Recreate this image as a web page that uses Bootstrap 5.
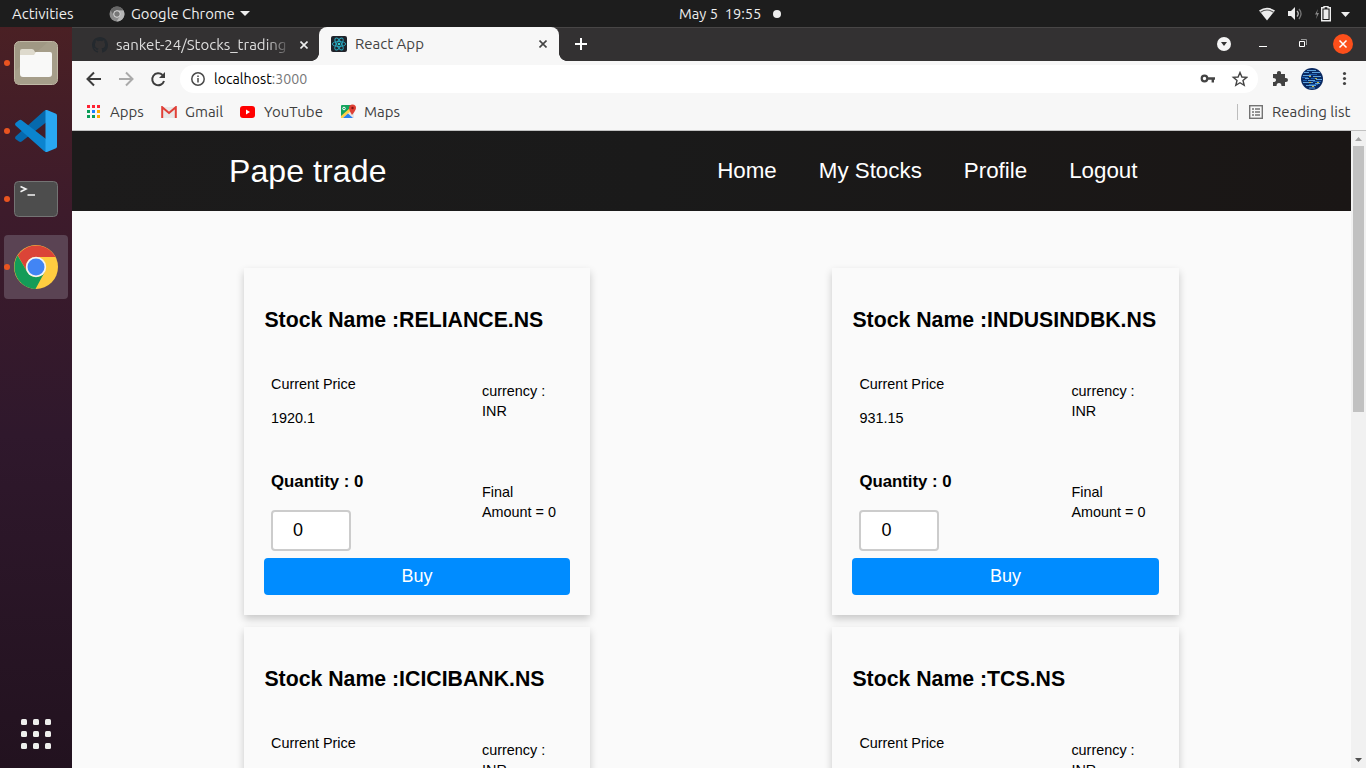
<!DOCTYPE html>
<html lang="en">
<head>
<meta charset="utf-8">
<meta name="viewport" content="width=device-width, initial-scale=1">
<title>React App</title>
<link href="https://cdn.jsdelivr.net/npm/bootstrap@5.3.0/dist/css/bootstrap.min.css" rel="stylesheet">
<style>
  html, body { height: 100%; overflow: hidden; }
  body { font-family: Ubuntu, "Noto Sans", sans-serif; font-size: 15px; line-height: 20px; }
  svg { display: block; flex: none; }
  .t { display: block; white-space: pre; flex: none; }
  .topbar { height: 27px; flex: none; background: #1d1d1d; color: #eee; display: grid; grid-template-columns: 679px 1fr auto; font-size: 14.667px; }
  .dock { width: 72px; background: linear-gradient(#4a2024 0, #3d1b2b 25%, #2f182c 55%, #22121f 100%); padding-top: 4px; flex: none; }
  .dock-item { width: 64px; height: 64px; margin: 0 4px 4px; border-radius: 4px; }
  .dock-item.active { background: #5a4353; }
  .dock-item::before { content: ""; width: 6px; height: 6px; border-radius: 50%; background: #e95420; flex: none; margin-right: 4px; }
  .tabstrip { height: 34px; flex: none; background: #333132; border-top: 1px solid #484646; color: #dedede; }
  .tab-old { width: 247px; padding-left: 20px; height: 33px; }
  .tab-old .t { width: 174px; overflow: hidden; -webkit-mask-image: linear-gradient(90deg, #000 150px, transparent 176px); }
  .tab-on { width: 240px; height: 34px; margin-top: -1px; background: #f7f7f7; color: #444; border-radius: 8px 8px 0 0; padding-left: 12px; position: relative; }
  .tab-on::before, .tab-on::after { content: ""; position: absolute; bottom: 0; width: 8px; height: 8px; }
  .tab-on::before { left: -8px; background: radial-gradient(circle at 0 0, transparent 7.6px, #f7f7f7 8.2px); }
  .tab-on::after { right: -8px; background: radial-gradient(circle at 100% 0, transparent 7.6px, #f7f7f7 8.2px); }
  .toolbar { height: 36px; flex: none; background: #f7f7f7; padding-left: 13px; }
  .omni { width: 1078px; height: 28px; border-radius: 14px; background: #fff; margin-left: 13px; padding-left: 10px; font-size: 14.2px; }
  .bookmarks { height: 34px; flex: none; background: #f7f7f7; border-bottom: 1px solid #c1c1c1; color: #3f3f3f; padding-left: 14px; }
  .site { font-family: "Liberation Sans", Arial, sans-serif; background: #fafafa; color: #000; overflow: hidden; }
  .sitenav { height: 80px; background: linear-gradient(90deg, #1c1b1b 0%, #1a1a1a 45%, #1a1615 100%); color: #fff; padding: 0 213.5px 0 157px; }
  .brand-name { font-size: 32px; line-height: 40px; letter-spacing: .1px; }
  .links { gap: 42px; font-size: 22.35px; line-height: 28px; }
  .stocks { display: grid; grid-template-columns: 346px 347px; column-gap: 242px; row-gap: 12px; padding: 57px 0 0 172px; }
  .stock { height: 347px; padding: 40px 20px 0; background: #fafafa; box-shadow: 0 4px 8px rgba(0,0,0,.2); font-size: 14.4px; line-height: 20px; }
  .stock h2 { font-size: 21.28px; line-height: 24px; font-weight: 700; margin: 0 0 42px .4px; white-space: nowrap; }
  .stock h3 { font-size: 16.8px; line-height: 20px; font-weight: 700; margin: 0 0 18px; }
  .facts { padding-left: 7px; height: 98px; }
  .facts .left { width: 211px; flex: none; }
  .stock:nth-child(even) .facts { padding-left: 7.4px; }
  .stock:nth-child(even) .left { width: 212px; }
  .qty { width: 80px; height: 41px; border: 2px solid #ccc; border-radius: 4px; padding: 0 20px; font-size: 18px; color: #000; background: #fff; }
  .buy { height: 37px; border: 0; border-radius: 4px; background: #008cff; color: #fff; font-size: 18px; line-height: 37px; padding: 0; margin-top: 86px; }
  .scroller { width: 15px; background: #f1f1f1; flex: none; }
  .thumb { width: 11px; height: 266px; background: #c1c1c1; margin: 2px 2px 0; }
</style>
</head>
<body class="d-flex flex-column">
<header class="topbar align-items-center">
  <div class="d-flex align-items-center">
    <span class="t" style="margin-left:12px;width:97px;font-size:15px">Activities</span>
    <svg width="16" height="16" viewBox="0 0 16 16"><circle cx="8" cy="8" r="7.5" fill="#8b8b8b"/><path d="M1.5 4.2A7.5 7.5 0 0 1 14.5 4.5H8A3.6 3.6 0 0 0 4.8 9.5Z" fill="#666"/><path d="M14.5 4.5A7.5 7.5 0 0 1 7.5 15.5L11 10A3.6 3.6 0 0 0 8 4.5Z" fill="#b5b5b5"/><circle cx="8" cy="8" r="3.3" fill="#777" stroke="#ddd"/></svg>
    <span class="t" style="margin-left:6px;width:109px;font-size:14.8px">Google Chrome</span>
    <svg width="10" height="5"><path d="M0 0H10L5 5Z" fill="#eee"/></svg>
  </div>
  <div class="d-flex align-items-center"><span class="t" style="width:94px">May 5  19:55</span><svg width="8" height="8"><circle cx="4" cy="4" r="4" fill="#eee"/></svg></div>
  <div class="d-flex align-items-center" style="padding-right:14px">
    <svg width="94" height="16" viewBox="0 0 94 16" fill="#eee"><path d="M1 4.500Q9 -1 17 4.500L9 14.500Z"/><path d="M2.500 6.200Q9 1.800 15.500 6.200" fill="none" stroke="#555" stroke-width="1.1"/><path d="M30 5H33L37 1V14L33 10H30Z"/><path d="M39 5Q41.500 7.500 39 10.500" stroke="#bbb" fill="none" stroke-width="1.300"/><path d="M41 3Q45 7.500 41 13" stroke="#777" fill="none" stroke-width="1.300"/><path d="M60 3L57 8.500H59L58 13L61 7H59Z" fill="#888"/><path d="M63.700 1.700H66V.5H70V1.700H72.300V14.800H63.700Z" fill="none" stroke="#eee" stroke-width="1.400"/><path d="M65.500 3.500H70.500V13H65.500Z"/><path d="M83 6H92L87.500 11Z"/></svg>
  </div>
</header>
<div class="d-flex flex-grow-1" style="min-height:0">
  <aside class="dock d-flex flex-column">
    <div class="dock-item d-flex align-items-center"><svg width="44" height="44" viewBox="0 0 44 44"><rect x=".5" y=".5" width="43" height="43" rx="5" fill="#a09884" stroke="#c1b9a6"/><path d="M1 30L34 1H39Q43 1 43 5V39Q43 43 39 43H1Z" fill="#aaa28e" opacity=".6"/><path d="M6 12V10Q6 8 8 8H18Q20 8 21 11H36V18H6Z" fill="#dedacd"/><path d="M6 14H20L22 11H36Q38 11 38 13V33Q38 36 35 36H9Q6 36 6 33Z" fill="#f9f9f8"/></svg></div>
    <div class="dock-item d-flex align-items-center"><svg width="44" height="44" viewBox="0 0 44 44"><path d="M32 1L30 2L1.500 27.500Q.5 29 1.500 30L5 32.500Q6.500 33.500 8 32.300L32 13.500Z" fill="#0669ad"/><path d="M1.500 14L5 11.300Q6.500 10.300 8 11.500L32 30V43L30 42L1.500 16.500Q.5 15 1.500 14Z" fill="#0b84cf"/><path d="M31.500 1L33 1L42 4.800Q43 5.300 43 6.500V37.500Q43 38.700 42 39.200L33 43H31.500Z" fill="#29a7f1"/></svg></div>
    <div class="dock-item d-flex align-items-center"><svg width="44" height="36" viewBox="0 0 44 36"><rect x=".5" y=".5" width="43" height="35" rx="4" fill="#4d4d4d" stroke="#747474"/><path d="M6.500 5.500L12 8L6.500 10.800M13.500 14H21" fill="none" stroke="#f4f4f4" stroke-width="1.600"/></svg></div>
    <div class="dock-item active d-flex align-items-center"><svg width="44" height="44" viewBox="0 0 44 44"><circle cx="22" cy="22" r="22" fill="#ffcd40"/><path d="M3.800 10.500A22 22 0 0 1 41.500 12H22A10 10 0 0 0 13.300 27Z" fill="#db4437"/><path d="M3.600 10.600A22 22 0 0 0 21.500 44L30.700 27A10 10 0 0 1 13.300 27Z" fill="#149c58"/><circle cx="22" cy="22" r="10.200" fill="#f4f4f4"/><circle cx="22" cy="22" r="8.500" fill="#4285f4"/></svg></div>
    <svg class="mt-auto" style="margin:0 0 19px 21px" width="30" height="30" fill="#eeeeec"><g id="r"><rect width="6" height="6" rx="1.500"/><rect x="12" width="6" height="6" rx="1.500"/><rect x="24" width="6" height="6" rx="1.500"/></g><use href="#r" y="12"/><use href="#r" y="24"/></svg>
  </aside>
  <main class="d-flex flex-column flex-grow-1" style="min-width:0">
    <div class="tabstrip d-flex">
      <div class="tab-old d-flex align-items-center">
        <svg width="16" height="16" viewBox="0 0 16 16"><path fill="#24292e" d="M8 0C3.580 0 0 3.580 0 8c0 3.540 2.290 6.530 5.470 7.590.4.070.55-.17.55-.38 0-.19-.01-.82-.01-1.490-2.010.37-2.530-.49-2.690-.94-.09-.23-.48-.94-.82-1.130-.28-.15-.68-.52-.01-.53.63-.01 1.080.58 1.230.82.72 1.210 1.870.87 2.330.66.07-.52.28-.87.51-1.070-1.780-.2-3.640-.89-3.640-3.950 0-.87.31-1.590.82-2.150-.08-.2-.36-1.020.08-2.120 0 0 .67-.21 2.200.82a7.500 7.500 0 0 1 4 0c1.530-1.040 2.200-.82 2.200-.82.44 1.100.16 1.920.08 2.120.51.56.82 1.270.82 2.150 0 3.070-1.870 3.750-3.650 3.950.29.25.54.73.54 1.480 0 1.070-.01 1.930-.01 2.200 0 .21.15.46.55.38A8 8 0 0 0 16 8c0-4.420-3.580-8-8-8"/></svg>
        <span class="t" style="margin-left:8px">sanket-24/Stocks_trading</span>
        <svg style="margin-left:10px" width="8" height="8"><path d="M.5.500L7.500 7.500M7.500.500L.5 7.500" stroke="#eee" stroke-width="1.600"/></svg>
      </div>
      <div class="tab-on d-flex align-items-center">
        <svg width="16" height="16" viewBox="0 0 16 16"><rect width="16" height="16" rx="2" fill="#20232a"/><g fill="none" stroke="#28a8c0" stroke-width=".9"><ellipse cx="8" cy="8" rx="6.700" ry="2.500"/><ellipse cx="8" cy="8" rx="6.700" ry="2.500" transform="rotate(60 8 8)"/><ellipse cx="8" cy="8" rx="6.700" ry="2.500" transform="rotate(120 8 8)"/></g><circle cx="8" cy="8" r="1.300" fill="#3cc"/></svg>
        <span class="t" style="margin-left:8px;width:184px">React App</span>
        <svg width="8" height="8"><path d="M.5.500L7.500 7.500M7.500.500L.5 7.500" stroke="#444" stroke-width="1.600"/></svg>
      </div>
      <svg style="margin:10px 0 0 16px" width="12" height="12"><path d="M6 0V12M0 6H12" stroke="#fff" stroke-width="2"/></svg>
      <svg class="ms-auto" style="margin:6px 13px 0 0" width="136" height="20" viewBox="0 0 136 20"><circle cx="7" cy="10" r="7" fill="#f5f5f5"/><path d="M4 8H10L7 12Z" fill="#333"/><path d="M42 12.500H50" stroke="#fff"/><path d="M82.500 7.500H87.500V12.500H82.500Z" fill="none" stroke="#fff"/><path d="M84 5.500H89.500V11" fill="none" stroke="#999"/><circle cx="126" cy="10" r="10" fill="#fc4f1b"/><path d="M122.500 6.500L129.500 13.500M129.500 6.500L122.500 13.500" stroke="#fff" stroke-width="1.500"/></svg>
    </div>
    <div class="toolbar d-flex align-items-center">
      <svg width="82" height="16" viewBox="0 0 82 16" fill="none" stroke="#3c3c3c" stroke-width="2"><path d="M16 8H3M9 1.500L2.500 8L9 14.500"/><path d="M34 8H47M41 1.500L47.500 8L41 14.500" stroke="#aaa"/><path d="M77.500 4A6 6 0 1 0 79 10"/><path d="M80 1V7H74Z" fill="#3c3c3c" stroke="none"/></svg>
      <div class="omni d-flex align-items-center">
        <svg width="16" height="16"><circle cx="8" cy="8" r="6.200" fill="none" stroke="#4a4a4a" stroke-width="1.500"/><path d="M8 7V11.500M8 4.500V6" stroke="#4a4a4a" stroke-width="1.500"/></svg>
        <span class="t" style="margin-left:8px;color:#000">localhost<span style="color:#777">:3000</span></span>
        <svg class="ms-auto" style="margin-right:10px" width="48" height="16" viewBox="0 0 48 16" fill="none" stroke="#444"><circle cx="4.500" cy="7.500" r="2.800" stroke-width="2.200"/><path d="M7 7.500H15M12.800 7.500V11.500" stroke-width="2.400"/><path d="M40 1.500L41.900 6L46.700 6.400L43 9.500L44.200 14.300L40 11.700L35.800 14.300L37 9.500L33.300 6.400L38.100 6Z" stroke-width="1.400"/></svg>
      </div>
      <svg style="margin-left:13px" width="80" height="22" viewBox="0 0 80 22"><path d="M2 6H6Q5.500 3 8 3T10 6H14V10Q17 9.500 17 12T14 14V18H10.500Q10.500 15 8 15T5.500 18H2V14Q5 14 5 12T2 10Z" fill="#424242"/><circle cx="41" cy="11" r="11" fill="#0a2a63"/><g fill="none" stroke-width="1"><path d="M36 2.500H45M33 4.500H38M41 4.500H49M32 7.500H40M42 8.500H50M34 10.500H38M45 11.500H51M37 12.500H44M32 14.500H42M44 15.500H49M35 17.500H45M38 20H44" stroke="#5ea3dc"/><path d="M38 6.500H46M31 9.500H37M40 10.500H44M32 12.500H36M42 13.500H50M38 16.500H47" stroke="#1e62b4"/><path d="M38 8.500H40M44 10.500H46M38 14.500H40M46 14.500H48M41 18.500H43" stroke="#c0b440"/></g><g fill="#444"><circle cx="73.500" cy="5.500" r="1.600"/><circle cx="73.500" cy="10.500" r="1.600"/><circle cx="73.500" cy="15.500" r="1.600"/></g></svg>
    </div>
    <div class="bookmarks d-flex align-items-center pb-1">
      <svg width="14" height="14"><g fill="#f23"><rect x="1" width="3" height="3"/><rect x="6" width="3" height="3"/><rect x="11" width="3" height="3"/></g><path d="M1 5H4V8H1ZM1 10H4V13H1ZM6 10H9V13H6Z" fill="#0a9d58"/><path d="M6 5H9V8H6Z" fill="#1a80ff"/><path d="M11 5H14V8H11ZM11 10H14V13H11Z" fill="#fa0"/></svg>
      <span class="t" style="margin-left:10px;width:51px">Apps</span>
      <svg width="16" height="12"><path d="M1 1H15V12H1Z" fill="#e8e8e8"/><path d="M1.200 12V1.200L8 7L14.800 1.200V12" fill="none" stroke="#e04038" stroke-width="2"/></svg>
      <span class="t" style="margin-left:8px;width:55px">Gmail</span>
      <svg width="15" height="12"><rect width="15" height="12" rx="3" fill="#f00"/><path d="M6 3.500L10 6L6 8.500Z" fill="#fff"/></svg>
      <span class="t" style="margin-left:9px;width:77px">YouTube</span>
      <svg width="15" height="15" viewBox="0 0 15 15"><rect y="1" width="13" height="13" rx="1" fill="#13a45e"/><path d="M0 14L13 2V14Z" fill="#e6e6e6"/><path d="M0 12L9 4L11 6L2 14H0Z" fill="#ffd04b"/><path d="M2 14L7 9.500L12 14Z" fill="#2a80f4"/><path d="M11 11Q8 6 8 4Q8 .5 11.500.500T15 4Q15 6 11 11Z" fill="#df4034"/><circle cx="11.500" cy="4" r="1.200" fill="#811"/><circle cx="3" cy="4.500" r="1.300" fill="none" stroke="#fff"/></svg>
      <span class="t" style="margin-left:8px">Maps</span>
      <span class="ms-auto" style="width:1px;height:16px;background:#bdbdbd"></span>
      <svg style="margin-left:11px" width="14" height="14" fill="none" stroke="#737373" stroke-width="1.400"><rect x=".7" y=".7" width="12.600" height="12.600"/><path d="M3 4H5M6 4H11M3 7H5M6 7H11M3 10H5M6 10H11"/></svg>
      <span class="t" style="margin-left:9px;width:94px">Reading list</span>
    </div>
    <div class="d-flex flex-grow-1" style="min-height:0">
      <div class="site flex-grow-1">
        <nav class="sitenav d-flex align-items-center justify-content-between">
          <span class="brand-name">Pape trade</span>
          <div class="links d-flex"><span>Home</span><span>My Stocks</span><span>Profile</span><span>Logout</span></div>
        </nav>
        <section class="stocks" id="stocks"></section>
      </div>
      <div class="scroller d-flex flex-column align-items-center">
        <svg width="15" height="13"><path d="M4 10H11L7.500 6Z" fill="#a3a3a3"/></svg>
        <div class="thumb"></div>
        <svg class="mt-auto" width="15" height="13"><path d="M4 3H11L7.500 7Z" fill="#505050"/></svg>
      </div>
    </div>
  </main>
</div>
<script src="https://cdn.jsdelivr.net/npm/bootstrap@5.3.0/dist/js/bootstrap.bundle.min.js"></script>
<script>
  // The second row runs past the fold, so only its heading and price label are filled in.
  const stocks = [['RELIANCE.NS', '1920.1'], ['INDUSINDBK.NS', '931.15'], ['ICICIBANK.NS'], ['TCS.NS']];
  document.getElementById('stocks').innerHTML = stocks.map(([name, price]) => `
    <article class="stock">
      <h2>Stock Name :${name}</h2>
      <div class="facts d-flex"><div class="left"><div>Current Price</div>${price ? `<div style="margin-top:14px">${price}</div>` : ''}</div><div style="margin-top:7px">currency :<br>INR</div></div>
      ${price ? `<div class="facts d-flex" style="height:0"><div class="left"><h3>Quantity : 0</h3><input class="qty" value="0" aria-label="Quantity"></div><div style="margin-top:10px">Final<br>Amount = 0</div></div>
      <button class="buy btn w-100">Buy</button>` : ''}
    </article>`).join('');
</script>
</body>
</html>
